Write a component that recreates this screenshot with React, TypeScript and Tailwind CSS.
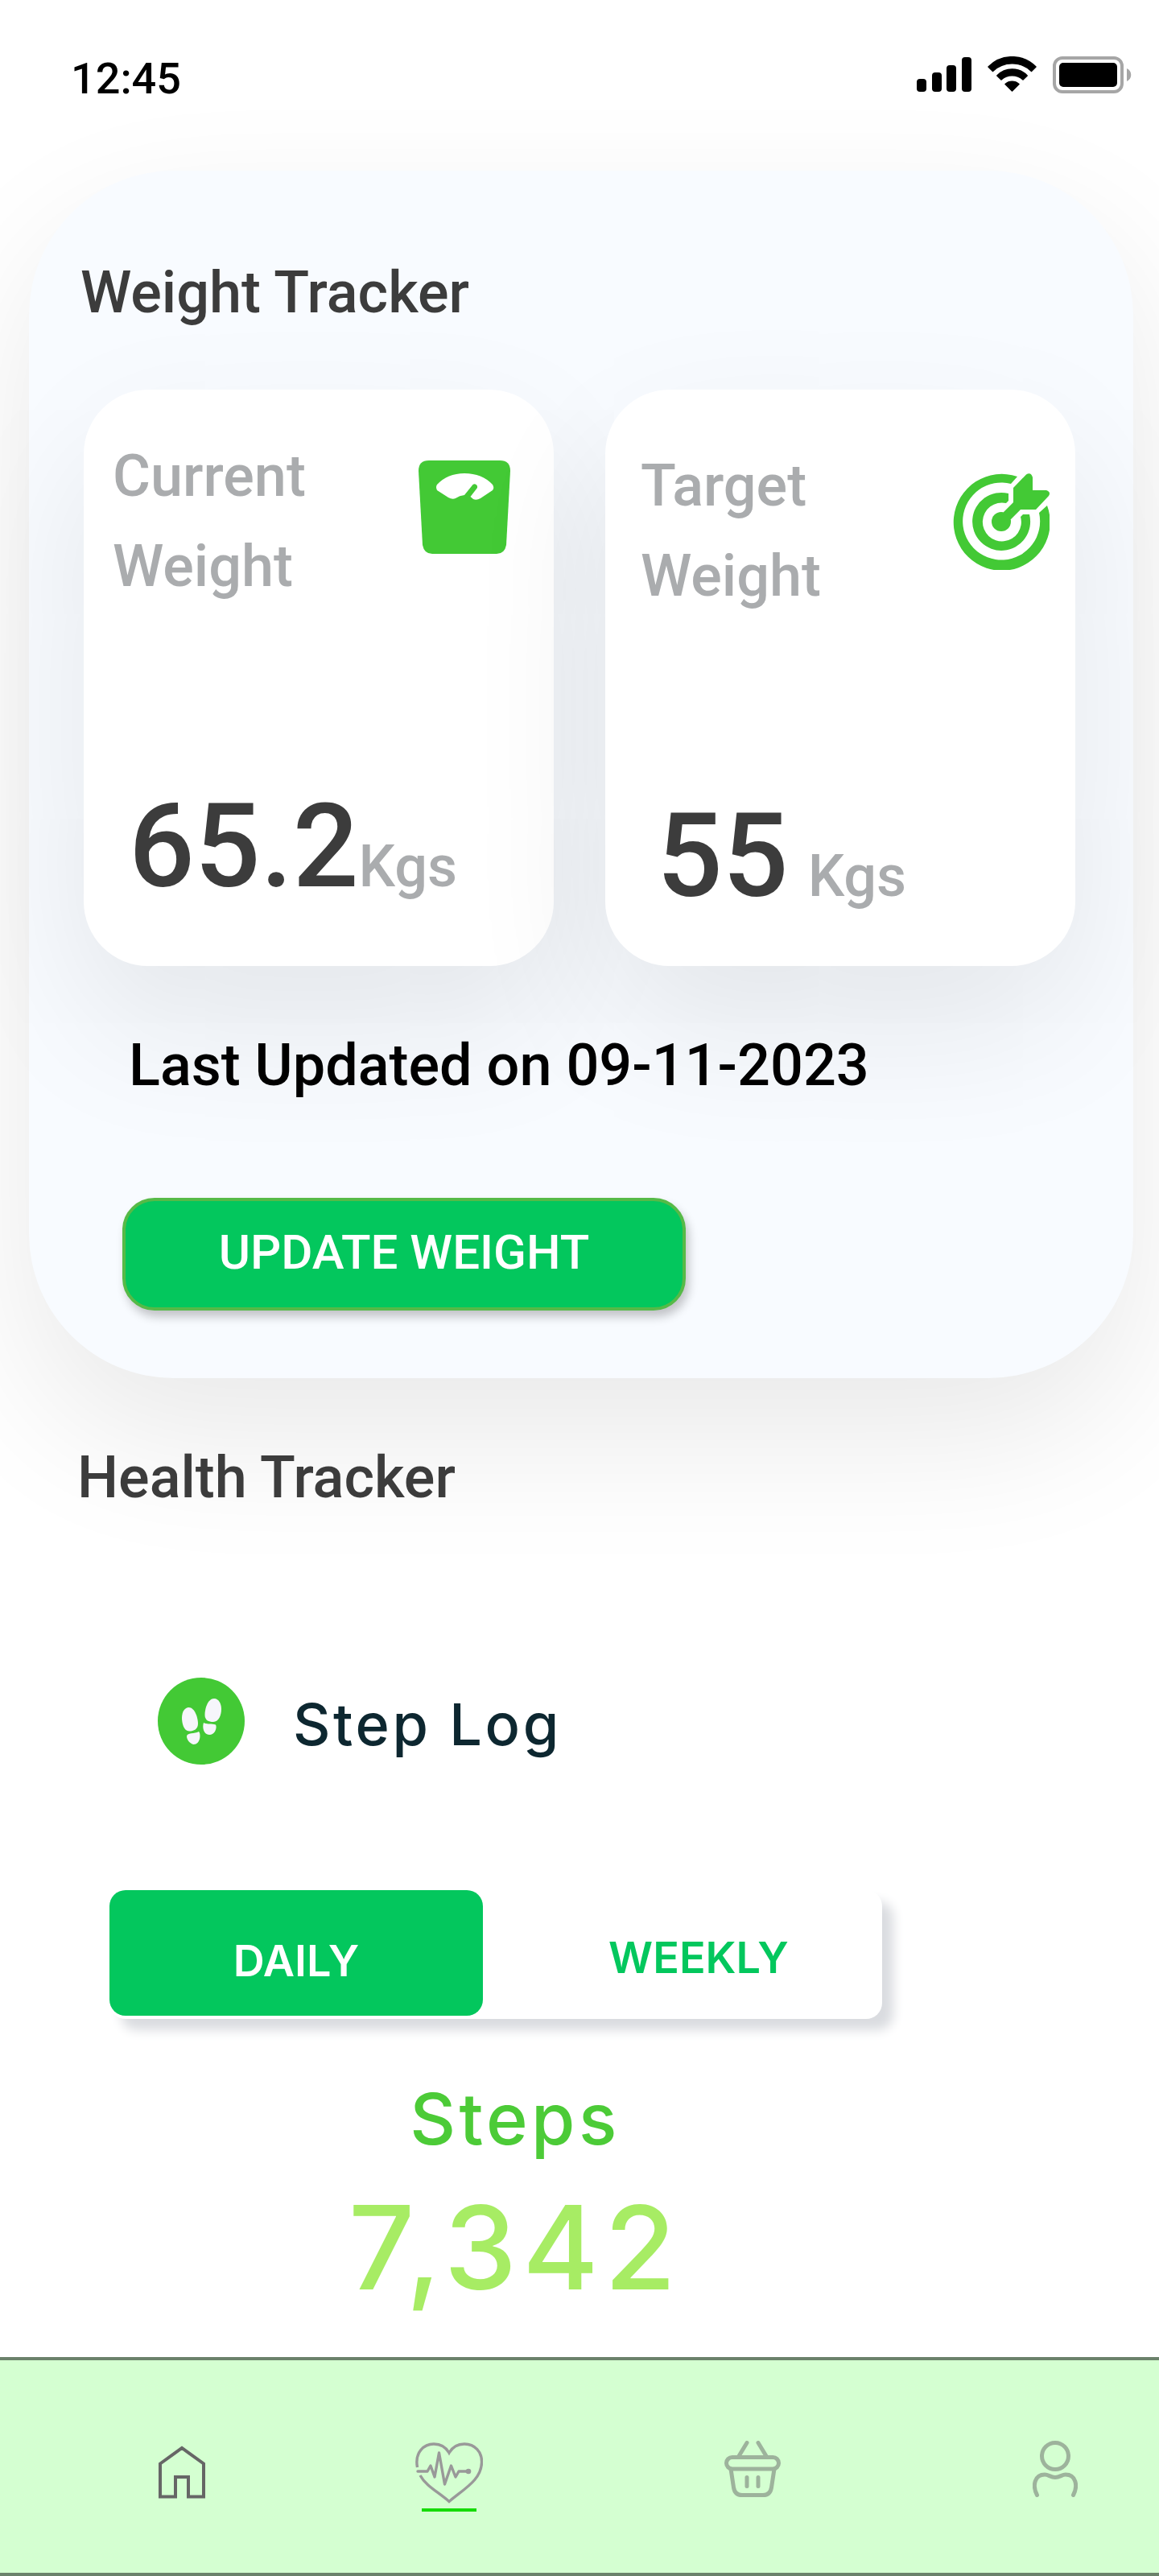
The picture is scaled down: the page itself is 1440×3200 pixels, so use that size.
import { useState } from "react";

function SignalIcon() {
  return (
    <svg width="68" height="44" viewBox="0 0 68 44" aria-hidden="true">
      <rect x="0" y="28" width="12" height="16" rx="4" />
      <rect x="19" y="20" width="12" height="24" rx="4" />
      <rect x="37" y="11" width="12" height="33" rx="4" />
      <rect x="56" y="1" width="12" height="43" rx="4" />
    </svg>
  );
}

function WifiIcon() {
  return (
    <svg width="61" height="44" viewBox="0 0 61 44" aria-hidden="true">
      <g stroke="#000" strokeWidth="1.5" strokeLinejoin="round">
        <path d="M1 13A41.5 41.5 0 0 1 60 13L54.5 18.5A34.5 34.5 0 0 0 6.5 18.5Z" />
        <path d="M11.8 24A26 26 0 0 1 49.2 24L44 29A20 20 0 0 0 17 29Z" />
        <path d="M22 34.5A13 13 0 0 1 39 34.5L30.5 43Z" />
      </g>
    </svg>
  );
}

function BatteryIcon() {
  return (
    <svg width="98" height="46" viewBox="0 0 98 46" aria-hidden="true">
      <rect x="2" y="2" width="84" height="42" rx="10" fill="none" stroke="#a6a6a6" strokeWidth="4" />
      <rect x="8" y="8" width="72" height="30" rx="5" />
      <path d="M92 15C99 18 99 28 92 31Z" fill="#a6a6a6" />
    </svg>
  );
}

function ScaleIcon() {
  return (
    <svg width="114" height="116" viewBox="0 0 114 116" aria-hidden="true" className="shrink-0">
      <path
        d="M13 0H101Q114 0 114 13L109 105Q107 116 97 116H17Q7 116 5 105L0 13Q0 0 13 0Z"
        fill="#43c935"
      />
      <path
        d="M23 30Q36 16 57 16Q79 16 92 30Q94.500 34 92 37L77 47Q72 50 68 48L64.500 45L73 34A3.600 3.600 0 0 0 67.500 30L57 43Q51 43.500 46 47Q42 49 37 46L23 37Q21 33 23 30Z"
        fill="#fff"
      />
    </svg>
  );
}

function TargetIcon() {
  return (
    <svg width="120" height="120" viewBox="0 0 120 120" fill="#43c935" aria-hidden="true" className="shrink-0">
      <path d="M80 4A60 60 0 1 0 117 40L107 49A48 48 0 1 1 72 13Z" />
      <path d="M69 25A36 36 0 1 0 95 51H87L84 54A24 24 0 1 1 66 37L69 34Z" />
      <circle cx="60" cy="60" r="12" />
      <path d="M63 48L75 36V18L91 1.500Q97 -2 99 5V21H116Q122 23 119 28L103 45H84L72 57L60 60Z" />
    </svg>
  );
}

function StepsIcon() {
  return (
    <svg width="108" height="108" viewBox="0 0 108 108" aria-hidden="true" className="shrink-0">
      <circle cx="54" cy="54" r="54" fill="#43c935" />
      <g fill="#f6f6fb">
        <path d="M38.500 37C46 37 50 50 50 57C50 64 45 66.500 39 66.500C32 66.500 30 56 30 50C30 42 34 37 38.500 37Z" />
        <path d="M70 26C76 26 79 33 79 39C79 46 76 55 69 55C63 55 58.500 53 58.500 46C58.500 39 62 26 70 26Z" />
        <path d="M36 73C36 68 46 70 51 67C54 70 53 83 44.500 83C40 82 36 77 36 73Z" />
        <path d="M57 56C62 58.500 66 56.500 72 58.500C74 62 71 71 64.500 71C57 71 55 62 57 56Z" />
      </g>
    </svg>
  );
}

function HomeIcon() {
  return (
    <svg width="58" height="66" viewBox="0 0 58 66" fill="none" stroke="#666" strokeWidth="4" aria-hidden="true">
      <path d="M2 22.500L29 3L56 22.500V63.500H37V39H21V63.500H2Z" />
    </svg>
  );
}

function HeartIcon() {
  return (
    <svg width="84" height="76" viewBox="0 0 84 76" fill="none" stroke="#999" strokeWidth="3.4" aria-hidden="true">
      <path d="M2.500 31C-1 12 11 2 23 2C31 2 38 6 42 13C46 6 53 2 61 2C74 2 83 12 82.500 25C82 47 60 58 42 73.500C29 62 13 54 6 41" />
      <path
        d="M3 36H15L19 29L24 43L29.500 13L36.500 52L44.500 29L50 43L54 36H65"
        strokeLinecap="round"
        strokeLinejoin="round"
      />
      <circle cx="66" cy="36" r="3.300" fill="#999" stroke="none" />
    </svg>
  );
}

function BasketIcon() {
  return (
    <svg width="70" height="70" viewBox="0 0 70 70" fill="none" stroke="#9db39c" strokeWidth="5" strokeLinecap="round" aria-hidden="true">
      <path d="M28 2.500L18 19M42 2.500L52 19M28 45.500V56.500M42 45.500V56.500" />
      <rect x="2.500" y="20.500" width="65" height="14.500" rx="7.250" />
      <path d="M8 35L11.500 58Q13 67.500 22 67.500H48Q57 67.500 58.500 58L62 35" />
    </svg>
  );
}

function PersonIcon() {
  return (
    <svg width="56" height="70" viewBox="0 0 56 70" fill="none" stroke="#9db39c" strokeWidth="5" strokeLinecap="round" aria-hidden="true">
      <circle cx="28" cy="19" r="16.500" />
      <path d="M5.500 67.500C-1 55 3 42 15 42C20 42 22 45.500 28 45.500C34 45.500 36 42 41 42C53 42 57 55 50.500 67.500" />
    </svg>
  );
}

const cardShadow = "shadow-[0_72px_180px_rgba(0,0,0,0.09)]";

export default function App() {
  const [period, setPeriod] = useState("daily");

  return (
    <div className="flex min-h-screen flex-col overflow-hidden bg-white font-['Roboto',sans-serif] font-medium text-[#3c3c3c]">
      <header className="flex h-[212px] items-start justify-between pt-[66px] pr-[34px] pl-[88px] text-black">
        <time className="text-[54px] leading-[64px]">12:45</time>
        <div className="mt-1 flex gap-5">
          <SignalIcon />
          <WifiIcon />
          <BatteryIcon />
        </div>
      </header>

      <main>
        <section className={`mr-8 ml-9 rounded-[180px] bg-[#f8fbff] pt-[110px] pb-[84px] ${cardShadow}`}>
          <h2 className="pl-16 text-[72px] leading-[84px]">Weight Tracker</h2>

          <div className="mt-[78px] grid grid-cols-2 gap-16 pr-[72px] pl-[68px]">
            <article className={`rounded-[80px] bg-white pt-13 pb-16 pl-9 ${cardShadow}`}>
              <div className="flex items-start justify-between pr-[54px]">
                <h3 className="w-64 text-[72px] leading-[112px] text-[#aaacae]">Current Weight</h3>
                <div className="pt-9">
                  <ScaleIcon />
                </div>
              </div>
              <p className="mt-52 flex items-baseline pl-5 text-[144px] leading-[168px]">
                65.2<span className="text-[72px] leading-[84px] text-[#aaacae]">Kgs</span>
              </p>
            </article>

            <article className={`rounded-[80px] bg-white pt-16 pb-13 pl-11 ${cardShadow}`}>
              <div className="flex items-start justify-between pr-8">
                <h3 className="w-64 text-[72px] leading-[112px] text-[#aaacae]">Target Weight</h3>
                <div className="pt-10">
                  <TargetIcon />
                </div>
              </div>
              <p className="mt-52 flex items-baseline gap-6 pl-5 text-[144px] leading-[168px]">
                55<span className="text-[72px] leading-[84px] text-[#aaacae]">Kgs</span>
              </p>
            </article>
          </div>

          <div className="mt-[82px] pl-[116px]">
            <p className="pl-2 text-[72px] leading-[84px] text-black">Last Updated on 09-11-2023</p>
            <button
              type="button"
              className="mt-[122px] h-[140px] w-[700px] rounded-[40px] border-4 border-[#56ba47] bg-[#03c75d] pb-1 text-[60px] leading-[72px] text-white shadow-[4px_8px_12px_rgba(0,0,0,0.22)]"
            >
              UPDATE WEIGHT
            </button>
          </div>
        </section>

        <section className="mt-[82px] font-['Inter',sans-serif]">
          <h2 className="pl-24 font-['Roboto',sans-serif] text-[72px] leading-[84px]">Health Tracker</h2>

          <div className="mt-[206px] flex items-center gap-15 pl-49">
            <StepsIcon />
            <h3 className="pt-2 text-[72px] leading-[84px] tracking-wider text-[#0d2730]">Step Log</h3>
          </div>

          <div className="mt-39 ml-[136px] w-[960px]">
            <div
              role="group"
              aria-label="Period"
              className="flex h-40 items-start rounded-[20px] bg-white text-[54px] leading-[64px] font-semibold shadow-[14px_14px_14px_#dadce0]"
            >
              <button
                type="button"
                aria-pressed={period === "daily"}
                onClick={() => setPeriod("daily")}
                className="h-39 w-[464px] rounded-[20px] bg-[#03c75d] pt-5 text-white"
              >
                DAILY
              </button>
              <button
                type="button"
                aria-pressed={period === "weekly"}
                onClick={() => setPeriod("weekly")}
                className="h-39 flex-1 rounded-[20px] pt-3 pl-10 text-[#03c75d]"
              >
                WEEKLY
              </button>
            </div>

            <div className="mt-19 pl-12 text-center">
              <p className="text-[88px] leading-[96px] tracking-wider text-[#4ccb37]">Steps</p>
              <p className="mt-8 text-[144px] leading-[160px] tracking-wider text-[#a7ec64]">7,342</p>
            </div>
          </div>
        </section>
      </main>

      <nav
        aria-label="Main"
        className="mt-auto flex h-[272px] items-start border-y-4 border-[#6b826b] bg-[#d4ffd1] pt-25 pl-[197px]"
      >
        <a href="#home" aria-label="Home" className="mt-[6px]">
          <HomeIcon />
        </a>
        <a href="#health" aria-label="Health" aria-current="page" className="mt-[2px] ml-[261px] flex flex-col items-center">
          <HeartIcon />
          <span className="mt-[6px] h-1 w-17 bg-[#15db04]" />
        </a>
        <a href="#shop" aria-label="Shop" className="ml-75">
          <BasketIcon />
        </a>
        <a href="#profile" aria-label="Profile" className="ml-[313px]">
          <PersonIcon />
        </a>
      </nav>
    </div>
  );
}
